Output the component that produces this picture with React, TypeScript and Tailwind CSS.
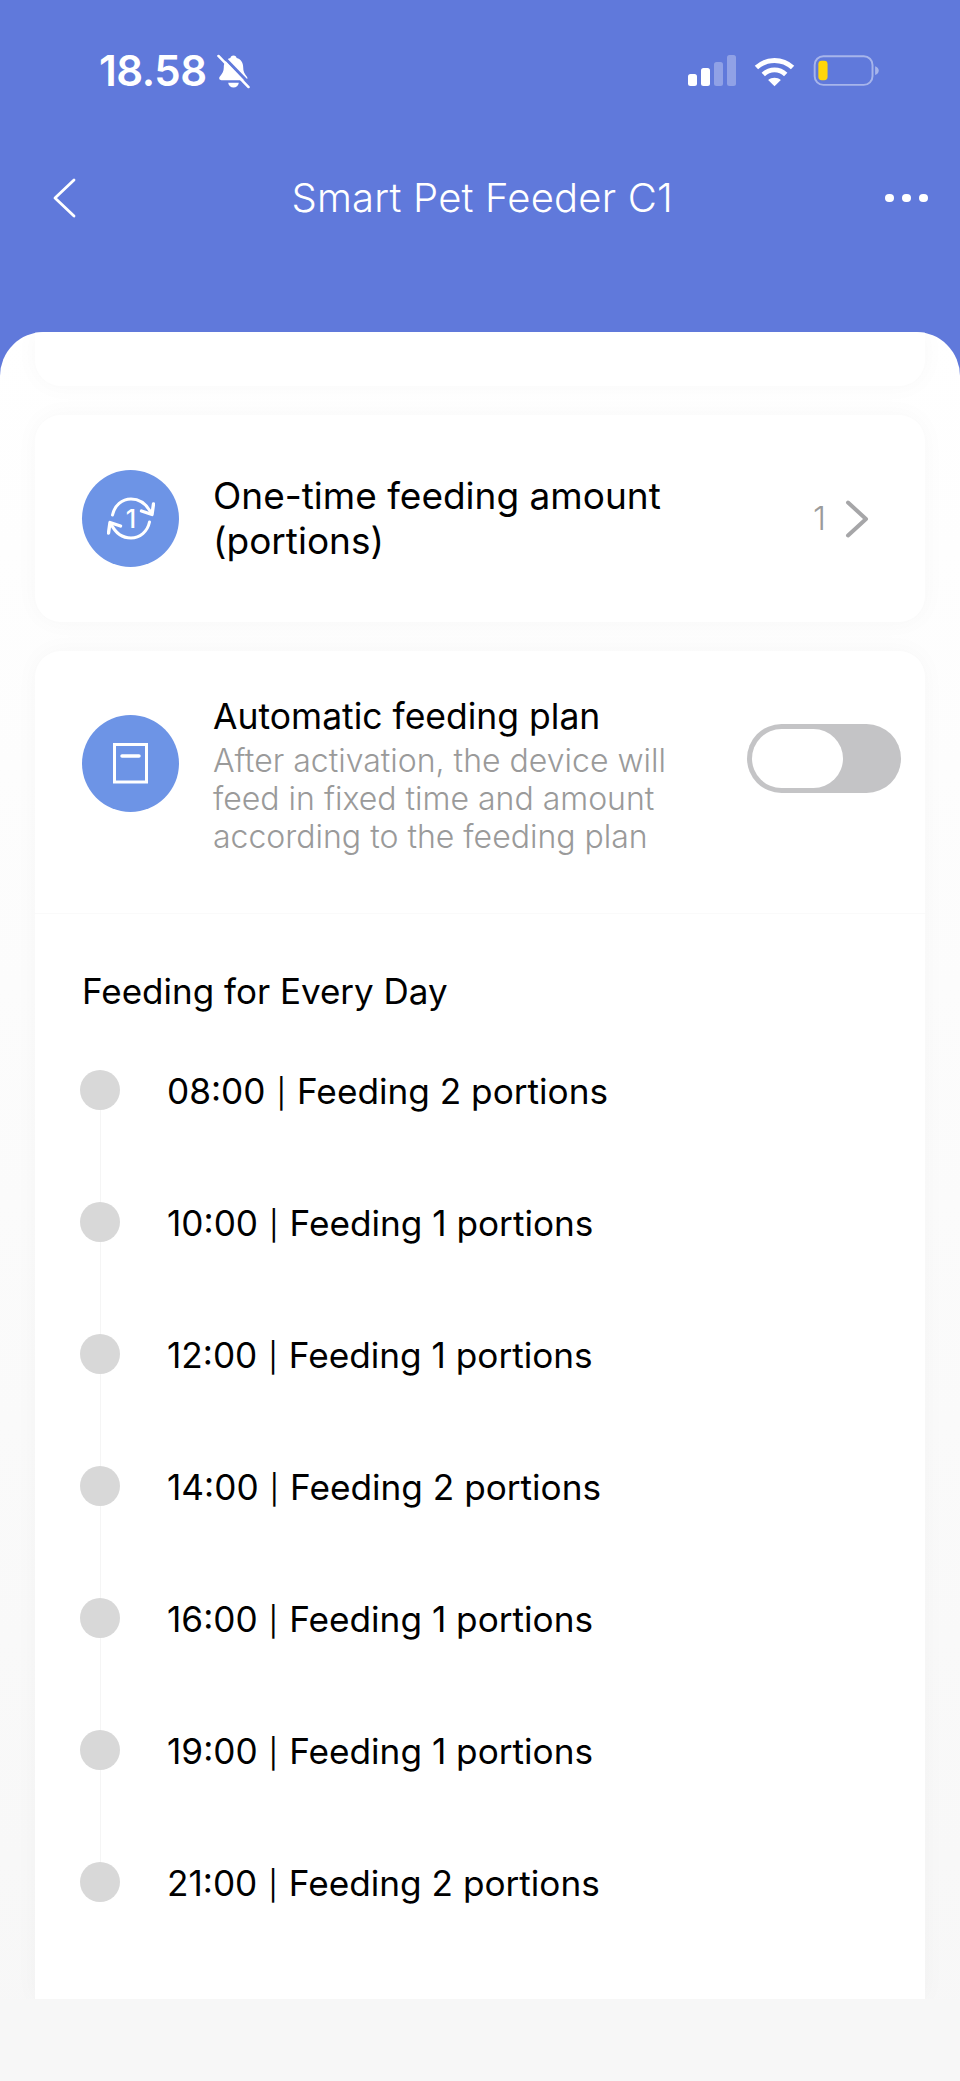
import React from "react";

const rows = [
  ["08:00", "Feeding 2 portions"],
  ["10:00", "Feeding 1 portions"],
  ["12:00", "Feeding 1 portions"],
  ["14:00", "Feeding 2 portions"],
  ["16:00", "Feeding 1 portions"],
  ["19:00", "Feeding 1 portions"],
  ["21:00", "Feeding 2 portions"],
];

function BellMuted() {
  return (
    <svg width="33" height="35" viewBox="0 0 34 36" className="ml-[10px] mt-[1px]">
      <path d="M17 1.500c1.900 0 3 1.100 3.200 2.700 4.600 1.200 6.800 5 6.800 9.800 0 3.500 1 6.400 3.600 9.200 1.400 1.600.6 3.800-1.600 3.800H4.600c-2.200 0-3-2.200-1.600-3.800C5.600 20.400 7 17.500 7 14c0-4.800 2.200-8.600 6.800-9.800C14 2.600 15.100 1.500 17 1.500z" fill="#fff" />
      <path d="M11.500 29.500h11c-.4 3-2.700 5-5.500 5s-5.100-2-5.500-5z" fill="#fff" />
      <path d="M4 0 34 31" stroke="#6079DB" strokeWidth="3" />
      <path d="M1.500 2 32.500 34" stroke="#fff" strokeWidth="2.600" strokeLinecap="round" />
    </svg>
  );
}

function Signal() {
  return (
    <svg width="48" height="32" viewBox="0 0 48 32">
      <rect x="0" y="19" width="9" height="12" rx="2.500" fill="#fff" />
      <rect x="13" y="13" width="9" height="18" rx="2.500" fill="#fff" />
      <rect x="26" y="7" width="9" height="24" rx="2.500" fill="#fff" fillOpacity="0.3" />
      <rect x="39" y="0" width="9" height="31" rx="2.500" fill="#fff" fillOpacity="0.3" />
    </svg>
  );
}

function Wifi() {
  return (
    <svg width="41" height="32" viewBox="0 0 42 32" fill="none">
      <path d="M2.500 12.500C7.500 7.800 14 5.200 21 5.200s13.500 2.600 18.500 7.300" stroke="#fff" strokeWidth="5" />
      <path d="M9.500 19.500C12.700 16.500 16.700 14.900 21 14.900s8.300 1.600 11.500 4.600" stroke="#fff" strokeWidth="5" />
      <path d="M14.500 25.200c1.800-1.500 4.100-2.300 6.500-2.300s4.700.8 6.500 2.300L21 31.500z" fill="#fff" />
    </svg>
  );
}

function Battery() {
  return (
    <svg width="67" height="33" viewBox="0 0 68 34" fill="none">
      <rect x="1.200" y="1.200" width="59.600" height="29.600" rx="9" stroke="#fff" strokeOpacity="0.45" strokeWidth="2" />
      <rect x="5" y="6" width="9.500" height="20" rx="3.500" fill="#FFD60A" />
      <path d="M63.500 11.500c2.400.6 3.700 2.500 3.700 4.500s-1.300 3.900-3.700 4.500z" fill="#fff" fillOpacity="0.45" />
    </svg>
  );
}

function RepeatOne() {
  return (
    <svg width="48" height="43" viewBox="0 0 48 43" fill="none" stroke="#fff" strokeWidth="3" strokeLinecap="round" strokeLinejoin="round">
      <path d="M5.500 18C7.500 8.500 15 2 24 2c8.500 0 15.500 5 20 14" />
      <path d="M42.500 25C40.500 34.500 33 41 24 41c-8.500 0-15.500-5-20-14" />
      <path d="M34.500 14 45 17.500 46.500 7" strokeWidth="3.400" />
      <path d="M13.500 29 3 25.500 1.500 36" strokeWidth="3.400" />
      <text x="24" y="31" fontSize="25" fontWeight="500" fill="#fff" stroke="none" textAnchor="middle" fontFamily="Inter, sans-serif">1</text>
    </svg>
  );
}

function PlanIcon() {
  return (
    <svg width="36" height="41" viewBox="0 0 36 41" fill="none">
      <rect x="1.500" y="1.500" width="32" height="37.500" stroke="#fff" strokeWidth="3" />
      <path d="M9 13h17" stroke="#fff" strokeWidth="3.500" strokeLinecap="round" />
    </svg>
  );
}

export default function App() {
  return (
    <div className="w-[960px] h-[2081px] overflow-hidden flex flex-col bg-[#6079DB] font-['Inter',sans-serif]">
      <header className="h-[332px] shrink-0 text-white">
        <div className="flex items-center justify-between h-[60px] mt-[41px] pl-[99px] pr-[80px]">
          <div className="flex items-center">
            <span className="text-[42px] leading-[44px] font-semibold tracking-[-0.5px]">18.58</span>
            <BellMuted />
          </div>
          <div className="flex items-center gap-[18px]">
            <Signal />
            <Wifi />
            <Battery />
          </div>
        </div>
        <div className="flex items-center justify-between h-[60px] mt-[67px] pl-[52px] pr-[32px]">
          <svg width="24" height="40" viewBox="0 0 24 40" fill="none">
            <path d="M22 2 3 20l19 18" stroke="#fff" strokeWidth="2.800" strokeLinecap="round" strokeLinejoin="round" />
          </svg>
          <span className="ml-[3px] text-[40px] leading-[60px] font-light tracking-[0.2px]">Smart Pet Feeder C1</span>
          <div className="flex items-center gap-[8.500px]">
            <span className="w-[8.500px] h-[8.500px] rounded-full bg-white" />
            <span className="w-[8.500px] h-[8.500px] rounded-full bg-white" />
            <span className="w-[8.500px] h-[8.500px] rounded-full bg-white" />
          </div>
        </div>
      </header>

      <main className="flex-1 flex flex-col rounded-t-[44px] bg-linear-to-b from-white to-[#f7f7f7] px-[35px] overflow-hidden">
        <div className="h-[54px] shrink-0 bg-white rounded-b-[26px] shadow-[0_0_24px_rgba(0,0,0,0.03)]" />

        <section className="mt-[29px] h-[207px] shrink-0 bg-white rounded-[26px] shadow-[0_0_24px_rgba(0,0,0,0.03)] flex items-center pl-[47px] pr-[56px]">
          <div className="w-[97px] h-[97px] rounded-full bg-[#6d94e6] flex items-center justify-center shrink-0">
            <RepeatOne />
          </div>
          <div className="ml-[34px] flex-1 text-[37px] leading-[45px] text-black -mt-[1px]">
            One-time feeding amount
            <br />
            (portions)
          </div>
          <span className="text-[33px] text-[#9b9b9b] font-light">1</span>
          <svg width="24" height="38" viewBox="0 0 24 38" fill="none" className="ml-[19px]">
            <path d="M3 2.500 21 19 3 35.500" stroke="#a6a6a8" strokeWidth="4" strokeLinecap="round" strokeLinejoin="round" />
          </svg>
        </section>

        <section className="mt-[29px] flex-1 bg-white rounded-t-[26px] shadow-[0_0_24px_rgba(0,0,0,0.03)] flex flex-col">
          <div className="h-[263px] shrink-0 flex items-start pl-[47px] pr-[24px] border-b border-[#fafafa]">
            <div className="mt-[64px] w-[97px] h-[97px] rounded-full bg-[#6d94e6] flex items-center justify-center shrink-0">
              <PlanIcon />
            </div>
            <div className="mt-[44px] ml-[34px] flex-1">
              <div className="text-[35.500px] leading-[44px] text-black">Automatic feeding plan</div>
              <div className="text-[32px] leading-[38px] text-[#9a9a9a] font-light mt-[3px] whitespace-nowrap">
                After activation, the device will
                <br />
                feed in fixed time and amount
                <br />
                according to the feeding plan
              </div>
            </div>
            <div className="mt-[73px] w-[154px] h-[69px] rounded-full bg-[#c4c4c6] p-[5px] shrink-0">
              <div className="w-[91px] h-[59px] rounded-full bg-white" />
            </div>
          </div>

          <div className="pl-[47px] pt-[51px]">
            <h2 className="text-[35px] leading-[52px] text-black font-normal">Feeding for Every Day</h2>
            <ul className="relative mt-[7px]">
              <span className="absolute left-[17.500px] top-[60px] bottom-[60px] w-[1px] bg-[#f5f5f5]" />
              {rows.map(([t, d]) => (
                <li key={t} className="relative h-[132px] flex items-center -ml-[2px]">
                  <span className="w-[40px] h-[40px] rounded-full bg-[#d8d8d8] shrink-0" />
                  <span className="ml-[47px] pt-[2px] text-[35.200px] text-black whitespace-nowrap">
                    {t} <span className="text-[29px] px-[1px]">|</span> {d}
                  </span>
                </li>
              ))}
            </ul>
          </div>
        </section>
        <div className="h-[82px] shrink-0 -mx-[35px] bg-[#f7f7f7]" />
      </main>
    </div>
  );
}
